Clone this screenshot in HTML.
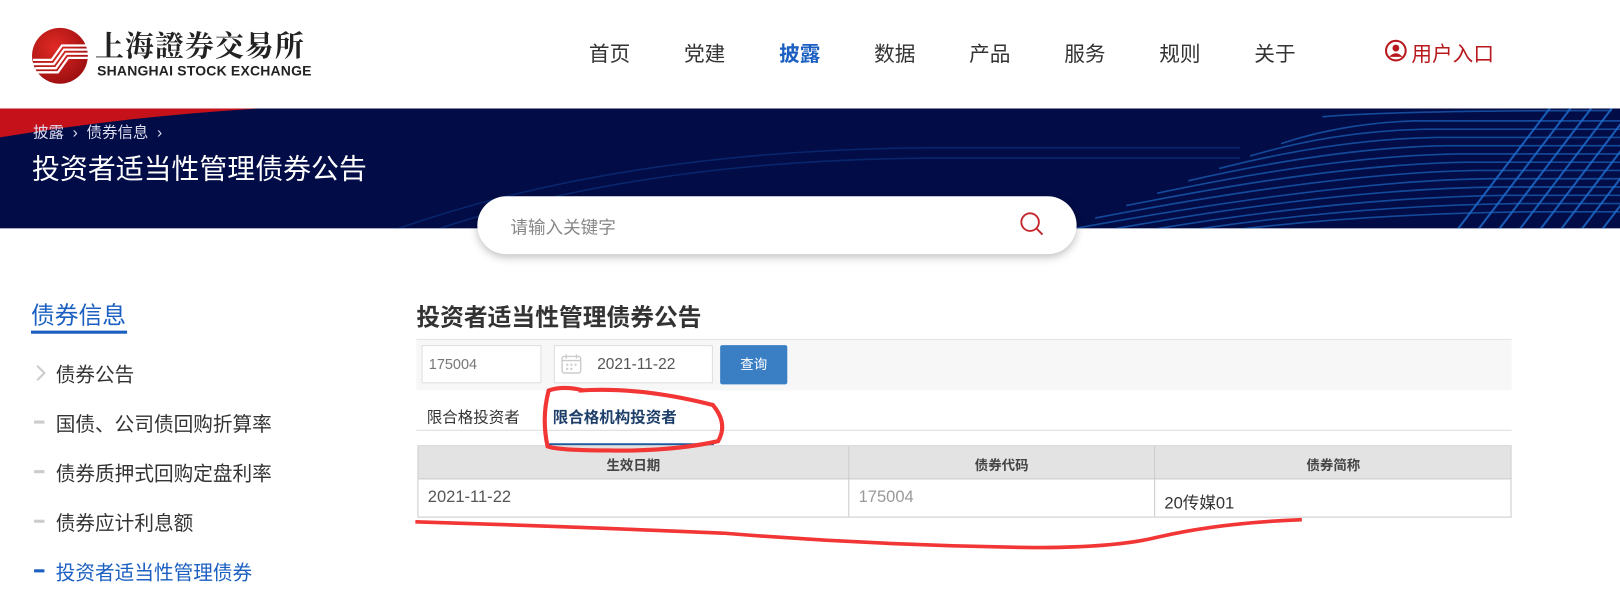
<!DOCTYPE html>
<html><head><meta charset="utf-8">
<style>
*{margin:0;padding:0;box-sizing:border-box}
html,body{width:1620px;height:608px;overflow:hidden;background:#fff}
body{font-family:"Liberation Sans","Noto Sans CJK SC",sans-serif;color:#333}
#w{position:absolute;left:0;top:0;width:1568px;height:589px;transform:scale(1.0332);transform-origin:0 0}
.abs{position:absolute;white-space:nowrap}
.nav{top:36px;font-size:20px;color:#333}
.side{left:54px;font-size:19px;color:#333}
.mk{left:33px;width:10px;height:3px;background:#ccc}
</style></head><body><div id="w">
<svg class="abs" style="left:28px;top:24px" width="64" height="60" viewBox="0 0 64 60">
<defs><radialGradient id="g" cx="40%" cy="35%" r="70%"><stop offset="0" stop-color="#e02a24"/><stop offset="1" stop-color="#9c0e10"/></radialGradient></defs>
<circle cx="30" cy="30" r="27" fill="url(#g)"/>
<path d="M4 34 H22 L32 20 H58 M4 38 H24 L34 24 H58 M6 42 H26 L36 28 H58 M8 46 H28 L38 32 H58" stroke="#fff" stroke-width="2.2" fill="none"/>
</svg>
<div class="abs" style="left:92px;top:26px;font-family:'Noto Serif CJK SC',serif;font-size:28px;font-weight:700;letter-spacing:1px;color:#222;line-height:34px">上海證券交易所</div>
<div class="abs" style="left:94px;top:61px;font-size:13.5px;font-weight:700;color:#222;letter-spacing:.2px">SHANGHAI STOCK EXCHANGE</div>
<div class="abs nav" style="left:570px">首页</div>
<div class="abs nav" style="left:662px">党建</div>
<div class="abs nav" style="left:754px;color:#1a5fc1;font-weight:700">披露</div>
<div class="abs nav" style="left:846px">数据</div>
<div class="abs nav" style="left:938px">产品</div>
<div class="abs nav" style="left:1030px">服务</div>
<div class="abs nav" style="left:1122px">规则</div>
<div class="abs nav" style="left:1214px">关于</div>
<svg class="abs" style="left:1340px;top:38px" width="22" height="22" viewBox="0 0 22 22"><circle cx="11" cy="11" r="9.5" fill="none" stroke="#b8191d" stroke-width="2"/><circle cx="11" cy="8.5" r="3.3" fill="#b8191d"/><path d="M4.5 17 Q11 10 17.5 17 Z" fill="#b8191d"/></svg>
<div class="abs nav" style="left:1366px;color:#b8191d">用户入口</div>
<div class="abs" style="left:0;top:105px;width:1568px;height:116px;background:#020c46;overflow:hidden">
<svg width="1568" height="116" viewBox="0 0 1568 116" style="position:absolute;left:0;top:0">
<path d="M0 0 H250 Q120 8 0 28 Z" fill="#c4111a"/>
<g stroke="#1a5bb0" stroke-width="1.6" fill="none" opacity=".8">
<path d="M1280 8 Q1350 2 1560 2"/>
<path d="M1240 34 Q1300 14 1370 12 H1568"/>
<path d="M1210 46 Q1290 22 1380 20 H1568"/>
<path d="M1180 58 Q1290 30 1390 28 H1568"/>
<path d="M1150 70 Q1290 38 1400 36 H1568"/>
<path d="M1120 82 Q1290 46 1410 44 H1568"/>
<path d="M1090 94 Q1290 54 1420 52 H1568"/>
<path d="M1060 106 Q1290 62 1430 60 H1568"/>
<path d="M1030 118 Q1290 70 1440 68 H1568"/>
<path d="M1070 118 Q1290 78 1450 76 H1568"/>
<path d="M1110 118 Q1300 86 1460 84 H1568"/>
<path d="M1150 118 Q1310 94 1470 92 H1568"/>
<path d="M1190 118 Q1320 102 1480 100 H1568"/>
</g>
<g stroke="#1e6fd0" stroke-width="2" opacity=".8">
<path d="M1470 118 L1560 0 M1490 118 L1580 0 M1510 118 L1600 0 M1530 118 L1620 0 M1550 118 L1640 0 M1450 118 L1540 0 M1430 118 L1520 0 M1410 118 L1500 0"/>
</g>
<g stroke="#0e3a88" stroke-width="1.5" fill="none" opacity=".6">
<path d="M380 118 Q600 40 900 38 H1200"/><path d="M420 118 Q620 50 900 48 H1200"/>
</g>
</svg>
</div>
<div class="abs" style="left:32px;top:117px;font-size:15px;color:#dde">披露 &nbsp;›&nbsp; 债券信息 &nbsp;›</div>
<div class="abs" style="left:31px;top:142px;font-size:27px;color:#fff">投资者适当性管理债券公告</div>
<div class="abs" style="left:462px;top:190px;width:580px;height:56px;background:#fff;border-radius:28px;box-shadow:0 3px 8px rgba(0,0,0,.25)"></div>
<div class="abs" style="left:494px;top:206px;font-size:17px;color:#888">请输入关键字</div>
<svg class="abs" style="left:986px;top:204px" width="26" height="26" viewBox="0 0 26 26"><circle cx="11" cy="11" r="8.5" fill="none" stroke="#c4262b" stroke-width="1.8"/><path d="M17 17 L23 23" stroke="#c4262b" stroke-width="1.8"/></svg>
<div class="abs" style="left:30px;top:286px;font-size:23px;color:#1a5fc1">债券信息</div>
<div class="abs" style="left:30px;top:320px;width:93px;height:3px;background:#1a5fc1"></div>
<svg class="abs" style="left:34px;top:352px" width="12" height="18" viewBox="0 0 12 18"><path d="M2 2 L9 9 L2 16" stroke="#ccc" stroke-width="2" fill="none"/></svg>
<div class="abs side" style="top:348px">债券公告</div>
<div class="abs mk" style="top:407px"></div><div class="abs side" style="top:396px">国债、公司债回购折算率</div>
<div class="abs mk" style="top:455px"></div><div class="abs side" style="top:444px">债券质押式回购定盘利率</div>
<div class="abs mk" style="top:503px"></div><div class="abs side" style="top:492px">债券应计利息额</div>
<div class="abs mk" style="top:551px;background:#1a5fc1"></div><div class="abs side" style="top:540px;color:#1a5fc1">投资者适当性管理债券</div>
<div class="abs" style="left:403px;top:288px;font-size:23px;font-weight:700;color:#333">投资者适当性管理债券公告</div>
<div class="abs" style="left:403px;top:328px;width:1060px;height:50px;background:#f7f7f7;border-top:1px solid #e3e3e3"></div>
<div class="abs" style="left:408px;top:334px;width:116px;height:37px;background:#fff;border:1px solid #ddd;font-size:14px;color:#777;padding:9px 0 0 6px">175004</div>
<div class="abs" style="left:536px;top:334px;width:154px;height:37px;background:#fff;border:1px solid #ddd;font-size:15px;color:#555;padding:9px 0 0 41px">2021-11-22</div>
<svg class="abs" style="left:542px;top:341px" width="22" height="22" viewBox="0 0 22 22"><rect x="2" y="4" width="18" height="16" rx="2" fill="none" stroke="#ccc" stroke-width="1.4"/><path d="M6 2v4M16 2v4M2 8h18" stroke="#ccc" stroke-width="1.4"/><g fill="#ccc"><rect x="6" y="11" width="2" height="2"/><rect x="10" y="11" width="2" height="2"/><rect x="14" y="11" width="2" height="2"/><rect x="6" y="15" width="2" height="2"/><rect x="10" y="15" width="2" height="2"/></g></svg>
<div class="abs" style="left:697px;top:334px;width:65px;height:38px;background:#3a7fc4;border-radius:2px;color:#fff;font-size:13px;text-align:center;line-height:38px">查询</div>
<div class="abs" style="left:403px;top:416px;width:1060px;height:1px;background:#ddd"></div>
<div class="abs" style="left:413px;top:393px;font-size:15px;color:#333">限合格投资者</div>
<div class="abs" style="left:535px;top:393px;font-size:15px;font-weight:700;color:#1e3f6a">限合格机构投资者</div>
<div class="abs" style="left:530px;top:429px;width:161px;height:2px;background:#1e5aa0"></div>
<div class="abs" style="left:404px;top:431px;width:1059px;height:70px;border:1px solid #ccc;background:#fff"></div>
<div class="abs" style="left:405px;top:432px;width:1057px;height:32px;background:#e3e3e3;border-bottom:1px solid #ccc"></div>
<div class="abs" style="left:821px;top:432px;width:1px;height:68px;background:#ccc"></div>
<div class="abs" style="left:1117px;top:432px;width:1px;height:68px;background:#ccc"></div>
<div class="abs" style="left:405px;top:440px;width:416px;text-align:center;font-size:13px;font-weight:700;color:#444">生效日期</div>
<div class="abs" style="left:822px;top:440px;width:295px;text-align:center;font-size:13px;font-weight:700;color:#444">债券代码</div>
<div class="abs" style="left:1118px;top:440px;width:345px;text-align:center;font-size:13px;font-weight:700;color:#444">债券简称</div>
<div class="abs" style="left:414px;top:473px;font-size:16px;color:#555">2021-11-22</div>
<div class="abs" style="left:831px;top:473px;font-size:16px;color:#999">175004</div>
<div class="abs" style="left:1127px;top:473px;font-size:16px;color:#333">20传媒01</div>
<svg class="abs" style="left:0;top:0" width="1568" height="589" viewBox="0 0 1568 589">
<path d="M560 378 Q620 374 690 392 Q705 410 695 427 Q650 437 590 436 Q540 436 530 432 Q524 405 531 378 Q545 373 565 378" stroke="#f23535" stroke-width="4" fill="none"/>
<path d="M402 505 Q560 510 700 516 Q850 528 1000 530 Q1080 530 1120 520 Q1180 506 1260 503" stroke="#f23535" stroke-width="3.5" fill="none"/>
</svg>
</div></body></html>
